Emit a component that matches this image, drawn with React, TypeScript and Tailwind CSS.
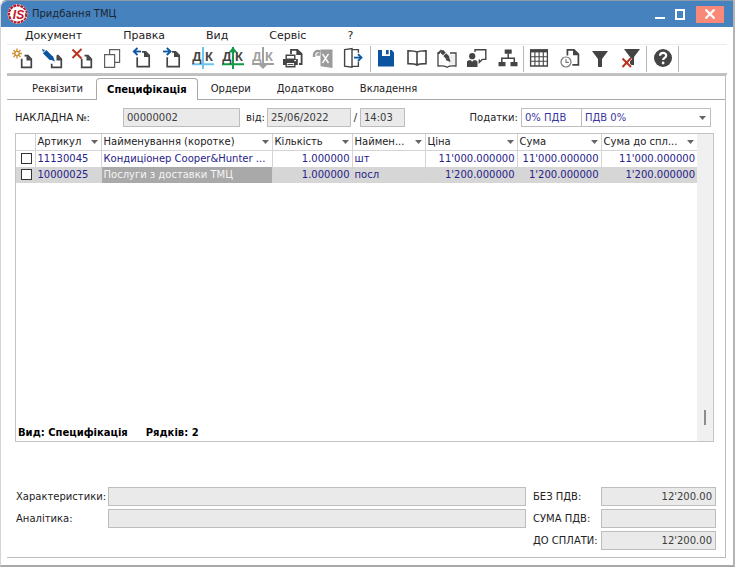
import type { ReactNode } from 'react';

const ink = '#444444';
const blue = '#0b55a0';
const red = '#b8321c';

function Icon({ children }: { children: ReactNode }) {
  return (
    <svg viewBox="0 0 22 22" className="h-[22px] w-[22px] shrink-0" fill="none" stroke={ink} strokeWidth="1.7" aria-hidden="true">
      {children}
    </svg>
  );
}

function SmallPage() {
  return (
    <>
      <path d="M13.5 8.7H17l3.3 3.3v8.3h-9.6v-8.6" />
      <path d="M15.5 8v5.4h5.4z" fill={ink} stroke="none" />
    </>
  );
}

function LargePage() {
  return (
    <>
      <path d="M11 4.8h3.6l3.6 3.6v11.2H6.2v-9.4" />
      <path d="M13 4v6H19z" fill={ink} stroke="none" />
    </>
  );
}

function DebitCredit({ letters, line, dir }: { letters: string; line: string; dir?: 'up' | 'down' }) {
  return (
    <Icon>
      <path d={dir === 'down' ? 'M11 0v19M0 17h22' : 'M11 0v22M0 17.3h22'} stroke={line} strokeWidth="2" />
      {dir === 'up' && <path d="M11 0l4.5 5.5h-9z" fill={line} stroke="none" />}
      {dir === 'down' && <path d="M11 22l4.5-4.5h-9z" fill={line} stroke="none" />}
      <g fill={letters} stroke="none" fontFamily="'Liberation Sans', sans-serif" fontSize="13" fontWeight="700">
        <text x="5" y="14" textAnchor="middle">Д</text>
        <text x="17" y="14" textAnchor="middle">К</text>
      </g>
    </Icon>
  );
}

const newIcon = (
  <Icon>
    <SmallPage />
    <g stroke="#cf9438" strokeWidth="1.4">
      <path d="M6 1.5v10M1 6.5h10M2.5 3l7 7M9.5 3l-7 7" />
      <circle cx="6" cy="6.5" r="2.1" fill="#fff" />
    </g>
  </Icon>
);
const editIcon = (
  <Icon>
    <path d="M16 8.7h1l3.3 3.3v8.3h-9.6v-3.5" />
    <path d="M15.5 8v5.4h5.4z" fill={ink} stroke="none" />
    <path d="M1 2l3 1-2 2z" fill={blue} stroke="none" />
    <path d="M3.6 4.6l7 7" stroke={blue} strokeWidth="4.8" />
    <path d="M11.8 9l2.2 5.4-5.6-2.2z" fill={blue} stroke="none" />
  </Icon>
);
const deleteIcon = (
  <Icon>
    <SmallPage />
    <path d="M1.5 2.5l9 9M10.5 2l-9 9" stroke={red} strokeWidth="1.9" />
  </Icon>
);
const copyIcon = (
  <Icon>
    <g stroke="#606060" strokeWidth="1.2">
      <path d="M8.6 2.6h10v12.8h-10z" />
      <path d="M3.6 7.6h10v12.8h-10z" fill="#fff" />
    </g>
  </Icon>
);
const prevIcon = (
  <Icon>
    <LargePage />
    <path d="M10 4.5H4" stroke={blue} strokeWidth="1.8" />
    <path d="M6.5 1L2.8 4.5 6.5 8" stroke={blue} strokeWidth="1.8" />
  </Icon>
);
const nextIcon = (
  <Icon>
    <LargePage />
    <path d="M2 4.5h6" stroke={blue} strokeWidth="1.8" />
    <path d="M5.8 1l3.7 3.5L5.8 8" stroke={blue} strokeWidth="1.8" />
  </Icon>
);
const printIcon = (
  <Icon>
    <path d="M9 7V2.8h6.3L19.6 7v10H17" strokeWidth="1.8" />
    <path d="M14.3 2v6h6z" fill={ink} stroke="none" />
    <path d="M4.2 8.2h8.6v4H4.2z" fill="#fff" strokeWidth="1.4" />
    <path d="M1 12h14.8v6H1z" fill={ink} stroke="none" />
    <path d="M12.3 13.6h1.8" stroke="#fff" strokeWidth="1.2" />
    <path d="M4.2 15.4h8.6v4.4H4.2z" fill="#fff" strokeWidth="1.4" />
    <path d="M5.5 17.6h6" strokeWidth="1" />
  </Icon>
);
const excelIcon = (
  <Icon>
    <path d="M8.5 2.6h12V21l-12-1.8z" fill="#9b9b9b" stroke="none" />
    <path d="M2 10C1.6 5 4 3.2 8.5 4.4" stroke="#9b9b9b" strokeWidth="2.4" />
    <path d="M3.5 8.4l4.5.4-.5-4z" fill="#9b9b9b" stroke="none" />
    <path d="M10.5 6.8l6 9.2M16.5 6.8l-6 9.2" stroke="#fff" strokeWidth="1.4" />
  </Icon>
);
const exitIcon = (
  <Icon>
    <path d="M2.6 2.6l7.4-1v18.6l-7.4-1z" strokeWidth="1.4" />
    <path d="M10 2.6h6.4v3.2M16.4 14.6v4.8H10" strokeWidth="1.4" />
    <path d="M12 10.6h7" stroke={blue} strokeWidth="1.8" />
    <path d="M16 7.2l3.5 3.4L16 14" stroke={blue} strokeWidth="1.8" />
  </Icon>
);
const saveIcon = (
  <Icon>
    <path d="M3 3h4v6h8V3h1.7L19 5.4v14.1H3z" fill={blue} stroke="none" />
    <path d="M11 3h2.6v4.3H11z" fill={blue} stroke="none" />
  </Icon>
);
const bookIcon = (
  <Icon>
    <path d="M11 5.2C9.4 4 6 3.8 2 3.8v12.8c4 0 7.4.2 9 1.6 1.6-1.4 5-1.6 9-1.6V3.8c-4 0-7.4.2-9 1.4zM11 5v13" strokeWidth="1.6" />
  </Icon>
);
const bookEditIcon = (
  <Icon>
    <path d="M11.5 7.500h7.500v10h-6z" fill="#eeeeee" stroke="none" />
    <path d="M4 6H2v13c4-.4 7-.2 9 1.200 2-1.400 5-1.600 9-1.200V6h-6" strokeWidth="1.300" />
    <path d="M1.800 6.800L5.500 3" strokeWidth="1.600" />
    <path d="M5.500 4l2.800 3M8.800 7.600l3 3.200" strokeWidth="4" />
    <path d="M13 9.500l1.500 5.500-5-2z" fill={ink} stroke="none" />
  </Icon>
);
const presenterIcon = (
  <Icon>
    <path d="M9 5V2.700h10.800v9.700h-3.500l-3 3v-3" strokeWidth="1.400" />
    <circle cx="6.200" cy="9.200" r="3.100" fill={ink} stroke="none" />
    <path d="M1 20v-5.500l1.500-1.300h2.300l1.400 1.500 1.400-1.500H10l1.500 1.300V20z" fill={ink} stroke="none" />
  </Icon>
);
const treeIcon = (
  <Icon>
    <path d="M7.700 2.500h7v4.300h-7zM1.500 15h7v4.300h-7zM13.500 15h7v4.300h-7z" fill={ink} stroke="none" />
    <path d="M11.200 6.500v4.800M4.800 15.500v-4.200h12.500v4.200" strokeWidth="1.500" />
  </Icon>
);
const tableIcon = (
  <Icon>
    <path d="M2.600 3h16.800v16H2.600z" strokeWidth="1.300" />
    <path d="M2 2.400h18v3H2z" fill={ink} stroke="none" />
    <path d="M2 9.700h18M2 14.300h18M6.900 5v14M11.100 5v14M15.300 5v14" strokeWidth="1.100" />
  </Icon>
);
const historyIcon = (
  <Icon>
    <path d="M8.400 8.500V2.800H15l4.400 4.400v10.600h-6" strokeWidth="1.700" />
    <path d="M14 2v6.200h6.200z" fill={ink} stroke="none" />
    <circle cx="7" cy="15" r="5" fill="#fff" stroke="#777777" strokeWidth="1.200" />
    <path d="M7 12v3.400h2.800" stroke="#777777" strokeWidth="1.100" />
  </Icon>
);
const filterIcon = (
  <Icon>
    <path d="M3 4h16l-6 8v8H9v-8z" fill={ink} stroke="none" />
  </Icon>
);
const clearFilterIcon = (
  <Icon>
    <path d="M4 2h16l-6 8v8h-4v-8z" fill={ink} stroke="none" />
    <path d="M2.500 11.500l8.500 8.500M11 11l-8.500 9" stroke="#fff" strokeWidth="3.200" />
    <path d="M2.500 11.500l8.500 8.500M11 11l-8.500 9" stroke={red} strokeWidth="1.900" />
  </Icon>
);
const helpIcon = (
  <Icon>
    <circle cx="11" cy="11" r="9" fill={ink} stroke="none" />
    <path d="M8 8.800c.1-4 6.300-3.800 6.200-.2 0 2.400-3.100 2.300-3.100 4.400" stroke="#fff" strokeWidth="2.200" />
    <circle cx="11.100" cy="16" r="1.400" fill="#fff" stroke="none" />
  </Icon>
);

type Tool = [string, ReactNode, boolean?];

const documentTools: Tool[] = [
  ['Створити', newIcon],
  ['Змінити', editIcon],
  ['Видалити', deleteIcon],
  ['Копіювати', copyIcon],
  ['Попередній', prevIcon],
  ['Наступний', nextIcon],
  ['Проводки', <DebitCredit letters={ink} line="#6cc4ee" />],
  ['Провести', <DebitCredit letters={ink} line="#129a4b" dir="up" />],
  ['Відкликати', <DebitCredit letters="#a0a0a0" line="#a0a0a0" dir="down" />, true],
  ['Друк', printIcon],
  ['Експорт', excelIcon, true],
  ['Вихід', exitIcon],
];
const recordTools: Tool[] = [
  ['Зберегти', saveIcon],
  ['Довідник', bookIcon],
  ['Редагувати', bookEditIcon],
  ['Коментар', presenterIcon],
  ['Структура', treeIcon],
];
const viewTools: Tool[] = [
  ['Таблиця', tableIcon],
  ['Історія', historyIcon],
  ['Фільтр', filterIcon],
  ['Зняти фільтр', clearFilterIcon],
];
const helpTools: Tool[] = [['Довідка', helpIcon]];

function ToolGroup({ tools, className }: { tools: Tool[]; className: string }) {
  return (
    <div className={`grid items-center justify-items-center border-r border-[#b8b8b8] pb-[2px] ${className}`}>
      {tools.map(([name, icon, disabled]) => (
        <button key={name} type="button" aria-label={name} disabled={disabled}>
          {icon}
        </button>
      ))}
    </div>
  );
}

const tabs = ['Ордери', 'Додатково', 'Вкладення'];
const box = 'h-[19px] border border-[#bdbdbd] bg-[#eaeaea] px-[3px] text-[#3c3c3c]';

const columns = [
  { name: 'Артикул', width: 'w-[66px]' },
  { name: 'Найменування (коротке)', width: '' },
  { name: 'Кількість', width: 'w-[80px]', right: true },
  { name: 'Наймен...', width: 'w-[73px]' },
  { name: 'Ціна', width: 'w-[92px]', right: true },
  { name: 'Сума', width: 'w-[84px]', right: true },
  { name: 'Сума до спл...', width: 'w-[96px]', right: true },
];
const rows = [
  ['11130045', 'Кондиціонер Cooper&Hunter ...', '1.000000', 'шт', "11'000.000000", "11'000.000000", "11'000.000000"],
  ['10000025', 'Послуги з доставки ТМЦ', '1.000000', 'посл', "1'200.000000", "1'200.000000", "1'200.000000"],
];

function Arrow() {
  return (
    <svg viewBox="0 0 7 4" className="h-[4px] w-[7px] shrink-0" fill="#666666" aria-hidden="true">
      <path d="M0 0h7L3.500 4z" />
    </svg>
  );
}

function Logo() {
  return (
    <svg viewBox="0 0 22 24" className="h-[24px] w-[22px]" aria-hidden="true">
      <circle cx="10.500" cy="12" r="10" fill="#fff" />
      <circle cx="10.500" cy="12" r="8.600" fill="none" stroke="#b01c2c" strokeWidth="2.400" strokeDasharray="2.900 0.700" />
      <text x="11.500" y="16.500" textAnchor="middle" fontFamily="'Liberation Sans', sans-serif" fontSize="12" fontStyle="italic" fontWeight="700" fill="#c0182a" stroke="#fff" strokeWidth="2.600" paintOrder="stroke">
        IS
      </text>
    </svg>
  );
}

export default function App() {
  return (
    <div className="flex min-h-screen flex-col rounded-tl-md border-t border-r-2 border-b-2 border-l border-t-[#8c9aaa] border-r-[#b4b4b4] border-b-[#a8a8a8] border-l-[#d4d4d4] bg-white font-['DejaVu_Sans',Verdana,sans-serif] text-[10px] leading-4 text-[#222222]">
      <header className="flex h-[26px] items-center rounded-tl-md bg-[#4682bd] pr-[9px] pl-[6px]">
        <Logo />
        <h1 className="ml-[3px] flex-1 text-[#1b2530]">Придбання ТМЦ</h1>
        <button type="button" aria-label="Згорнути" className="flex h-4 w-[20px] items-end justify-center pb-[3px]">
          <span className="h-[2px] w-[10px] bg-white" />
        </button>
        <button type="button" aria-label="Розгорнути" className="flex h-4 w-[20px] items-center justify-center">
          <span className="h-[11px] w-[10px] border-2 border-white" />
        </button>
        <button type="button" aria-label="Закрити" className="ml-[6px] flex h-[17px] w-[28px] items-center justify-center bg-[#f88878]">
          <svg viewBox="0 0 10 10" className="h-[10px] w-[10px]" stroke="#fff" strokeWidth="2.200" aria-hidden="true">
            <path d="M0.500 0.500l9 9M9.500 0.500l-9 9" />
          </svg>
        </button>
      </header>

      <nav className="flex h-[17px] items-center gap-[41px] pl-[24px] text-[11px]">
        {['Документ', 'Правка', 'Вид', 'Сервіс', '?'].map((item) => (
          <button key={item} type="button">{item}</button>
        ))}
      </nav>

      <div className="mr-[6px] ml-[6px] flex h-[31px] items-stretch border-t border-b-2 border-t-[#ececec] border-b-[#c2c2c2] py-px">
        <ToolGroup tools={documentTools} className="w-[364px] grid-cols-12 pr-[2px]" />
        <ToolGroup tools={recordTools} className="w-[153px] grid-cols-5" />
        <ToolGroup tools={viewTools} className="w-[123px] grid-cols-4" />
        <ToolGroup tools={helpTools} className="w-[32px] grid-cols-1" />
      </div>

      <main className="mr-[7px] mb-[7px] ml-[6px] flex flex-1 flex-col border-t border-r border-b border-[#bdbdbd]">
        <div role="tablist" className="flex h-[24px] items-end">
          <button type="button" role="tab" aria-selected="false" className="h-[21px] border-b border-[#a8a8a8] pr-[13px] pl-[25px]">Реквізити</button>
          <button type="button" role="tab" aria-selected="true" className="h-[22px] rounded-t-sm border-x border-t border-[#a8a8a8] px-[10px] font-bold text-black">Специфікація</button>
          {tabs.map((tab) => (
            <button key={tab} type="button" role="tab" aria-selected="false" className="h-[21px] border-b border-[#a8a8a8] px-[13px]">{tab}</button>
          ))}
          <div className="h-[21px] flex-1 border-b border-[#a8a8a8]" />
        </div>

        <form className="flex items-center pt-[8px] pr-[14px] pb-[6px] pl-[8px]">
          <label htmlFor="invoice" className="w-[108px]">НАКЛАДНА №:</label>
          <input id="invoice" readOnly defaultValue="00000002" className={`${box} w-[117px]`} />
          <label htmlFor="date" className="w-[27px] pl-[6px]">від:</label>
          <input id="date" readOnly defaultValue="25/06/2022" className={`${box} w-[84px]`} />
          <label htmlFor="time" className="w-[9px] text-center">/</label>
          <input id="time" readOnly defaultValue="14:03" className={`${box} w-[45px]`} />
          <label htmlFor="tax" className="ml-auto pr-[3px]">Податки:</label>
          <input id="tax" defaultValue="0% ПДВ" className="h-[19px] w-[61px] border border-[#bdbdbd] px-[3px] text-[#3a36a0]" />
          <div className="relative -ml-px">
            <select aria-label="Ставка ПДВ" className="block h-[19px] w-[130px] appearance-none border border-[#bdbdbd] px-[3px] text-[#3a36a0]">
              <option>ПДВ 0%</option>
            </select>
            <span className="pointer-events-none absolute inset-y-0 right-[5px] flex items-center"><Arrow /></span>
          </div>
        </form>

        <section className="mr-[11px] ml-[8px] flex flex-1 border border-[#c2c2c8]">
          <div className="flex min-w-0 flex-1 flex-col justify-between">
            <table className="w-full table-fixed border-collapse">
              <thead>
                <tr className="h-4 border-b border-[#d4d4d4]">
                  <td className="w-[19px] p-0" />
                  {columns.map((c) => (
                    <th key={c.name} className={`border-l border-[#d4d4d4] p-0 font-normal ${c.width}`}>
                      <button type="button" className="flex w-full items-center justify-between pr-[3px] pl-[2px] leading-[15px] whitespace-nowrap">
                        {c.name}
                        <Arrow />
                      </button>
                    </th>
                  ))}
                </tr>
              </thead>
              <tbody className="text-[#26228a]">
                {rows.map((row, r) => (
                  <tr key={row[0]} className={r === 1 ? 'h-4 bg-[#d6d6d6]' : 'h-4'}>
                    <td className="p-0">
                      <input type="checkbox" aria-label={row[0]} className="mr-[3px] ml-auto block h-[11px] w-[11px] appearance-none border border-[#333333] bg-white" />
                    </td>
                    {row.map((value, i) => (
                      <td key={i} className={`truncate border-l border-[#d4d4d4] py-0 pr-[2px] pl-[2px] ${columns[i].right ? 'text-right' : ''} ${r === 1 && i === 1 ? 'bg-[#a9a9a9] text-[#f4f4f4]' : ''}`}>{value}</td>
                    ))}
                  </tr>
                ))}
              </tbody>
            </table>
            <p className="flex gap-[18px] pl-[2px] font-bold text-black">
              <span>Вид: Специфікація</span>
              <span>Рядків: 2</span>
            </p>
          </div>
          <div className="flex w-4 items-end justify-center bg-[#f0f0f0] pb-[16px]">
            <span className="h-[15px] w-[2px] bg-[#8c8c8c]" />
          </div>
        </section>

        <form className="grid grid-cols-[92px_1fr_75px_115px] items-center gap-y-[3px] pt-[45px] pr-[9px] pb-[7px] pl-[9px]">
          <label htmlFor="traits">Характеристики:</label>
          <input id="traits" readOnly className={`${box} min-w-0`} />
          <label htmlFor="net" className="pl-[7px] whitespace-nowrap">БЕЗ ПДВ:</label>
          <input id="net" readOnly defaultValue="12'200.00" className={`${box} min-w-0 text-right`} />
          <label htmlFor="analytics">Аналітика:</label>
          <input id="analytics" readOnly className={`${box} min-w-0`} />
          <label htmlFor="vat" className="pl-[7px] whitespace-nowrap">СУМА ПДВ:</label>
          <input id="vat" readOnly className={`${box} min-w-0 text-right`} />
          <label htmlFor="total" className="col-start-3 pl-[7px] whitespace-nowrap">ДО СПЛАТИ:</label>
          <input id="total" readOnly defaultValue="12'200.00" className={`${box} min-w-0 text-right`} />
        </form>
      </main>
    </div>
  );
}
